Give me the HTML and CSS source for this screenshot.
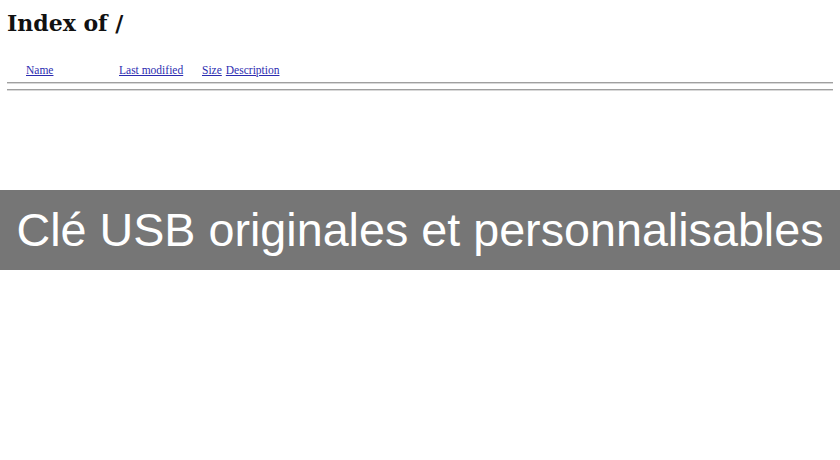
FILE: index.html
```html
<!DOCTYPE html>
<html>
<head>
    <meta charset="utf-8">
    <title>Index of /</title>
    <link rel="stylesheet" href="styles.css">
</head>
<body>
    <div class="listing">
        <h1>Index of /</h1>
        <table class="files">
            <tr>
                <th class="icon"></th>
                <th class="name"><a href="#">Name</a></th>
                <th class="modified"><a href="#">Last modified</a></th>
                <th class="size"><a href="#">Size</a></th>
                <th class="desc"><a href="#">Description</a></th>
            </tr>
        </table>
        <hr class="rule">
        <hr class="rule">
    </div>

    <div class="banner">
        <span>Clé USB originales et personnalisables</span>
    </div>
</body>
</html>
```

FILE: styles.css
```css
body {
    margin: 0;
    background: #ffffff;
    font-family: 'Liberation Serif', 'DejaVu Serif', serif;
}

.listing {
    padding: 0 7px;
}

.listing h1 {
    margin: 0;
    padding-top: 8px;
    font-family: 'DejaVu Serif', serif;
    font-size: 22px;
    line-height: 30px;
    font-weight: bold;
    color: #111;
}

.files {
    margin-top: 25px;
    border-collapse: collapse;
    font-size: 11.5px;
}

.files th {
    padding: 0 2px;
    font-weight: normal;
    text-align: left;
    line-height: 14px;
}

.files th.icon { width: 13px; }
.files th.name { width: 89px; }
.files th.modified { width: 79px; }
.files th.size { width: 19px; }

.files a {
    color: #2b2bb0;
    text-decoration: underline;
}

.rule {
    margin: 5px 0 0;
    border: 0;
    border-top: 1px solid #a0a0a0;
    border-bottom: 1px solid #d8d8d8;
    height: 0;
}

.rule + .rule {
    margin-top: 5px;
}

.banner {
    position: absolute;
    left: 0;
    right: 0;
    top: 190px;
    height: 80px;
    background: #767676;
    display: flex;
    align-items: center;
    justify-content: center;
}

.banner span {
    color: #ffffff;
    font-family: 'Liberation Sans', Arial, sans-serif;
    font-size: 46.7px;
    white-space: nowrap;
}
```
